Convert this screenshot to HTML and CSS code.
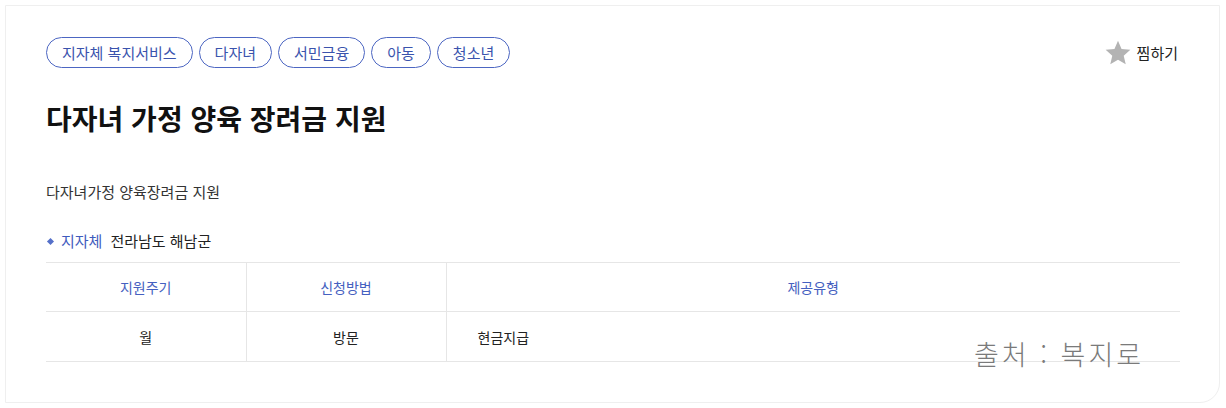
FILE: index.html
```html
<!DOCTYPE html>
<html lang="ko">
<head>
<meta charset="utf-8">
<link rel="stylesheet" href="styles.css">
</head>
<body>
<div class="card">
  <div class="top">
    <ul class="tags">
      <li>지자체 복지서비스</li>
      <li>다자녀</li>
      <li>서민금융</li>
      <li>아동</li>
      <li>청소년</li>
    </ul>
    <button class="fav">
      <svg width="28" height="28" viewBox="0 0 24 24"><path d="M12 1.6l3.05 6.9 7.55.75-5.7 5 1.72 7.45L12 17.8l-6.62 3.9 1.72-7.45-5.7-5 7.55-.75z" fill="#b3b3b3"/></svg>
      <span>찜하기</span>
    </button>
  </div>
  <h1 class="title">다자녀 가정 양육 장려금 지원</h1>
  <p class="desc">다자녀가정 양육장려금 지원</p>
  <div class="org"><span class="dot"></span><span class="org-label">지자체</span><span class="org-value">전라남도 해남군</span></div>
  <table class="info">
    <thead>
      <tr><th class="c1">지원주기</th><th class="c2">신청방법</th><th>제공유형</th></tr>
    </thead>
    <tbody>
      <tr><td class="c1">월</td><td class="c2">방문</td><td class="left">현금지급</td></tr>
    </tbody>
  </table>
  <div class="source">출처 : 복지로</div>
</div>
</body>
</html>
```
FILE: styles.css
```css
* { box-sizing: border-box; }
html, body { margin: 0; padding: 0; background: #fff; }
body {
  font-family: "Noto Sans CJK KR", "Noto Sans", sans-serif;
  color: #222;
  width: 1226px;
  height: 408px;
  overflow: hidden;
}
.card {
  position: relative;
  margin: 5px 0 0 5px;
  width: 1215px;
  height: 398px;
  border: 1px solid #efefef;
  border-radius: 0 0 20px 0;
  padding: 31px 39px 0 40px;
}
.top {
  display: flex;
  justify-content: space-between;
  align-items: center;
}
.tags {
  display: flex;
  gap: 6px;
  list-style: none;
  margin: 0;
  padding: 0;
}
.tags li {
  border: 1px solid #4c66c2;
  border-radius: 16px;
  padding: 4px 15px;
  font-size: 15px;
  line-height: 21px;
  color: #3a53ad;
}
.fav {
  display: flex;
  align-items: center;
  gap: 5px;
  background: none;
  border: 0;
  padding: 0;
  margin-right: 2px;
  font-family: inherit;
  font-size: 15px;
  color: #222;
}
.fav span { line-height: 20px; }
.title {
  margin: 30px 0 0;
  font-size: 28px;
  line-height: 40px;
  font-weight: 700;
  color: #111;
  letter-spacing: 0;
}
.desc {
  margin: 43px 0 0;
  font-size: 15px;
  line-height: 22px;
  color: #333;
}
.org {
  display: flex;
  align-items: center;
  margin-top: 27px;
  font-size: 15px;
  line-height: 22px;
}
.dot {
  width: 5px;
  height: 5px;
  background: #5570c9;
  transform: rotate(45deg);
  margin: 0 8px 0 2px;
}
.org-label { color: #3f5bbd; margin-right: 8px; }
.org-value { color: #222; }
.info {
  margin-top: 10px;
  width: 1134px;
  border-collapse: collapse;
  font-size: 14px;
}
.info th, .info td {
  border-top: 1px solid #e6e6e6;
  border-bottom: 1px solid #e6e6e6;
  text-align: center;
  font-weight: 400;
}
.info th { height: 49px; color: #4560c0; }
.info td { height: 50px; color: #222; }
.info .c1, .info .c2 { width: 200px; border-right: 1px solid #e6e6e6; }
.info td.left { text-align: left; padding-left: 31px; }
.source {
  position: absolute;
  left: 968px;
  top: 330px;
  font-family: "Noto Sans CJK KR", sans-serif;
  font-weight: 300;
  font-size: 27px;
  line-height: 36px;
  color: #7a7a7a;
  letter-spacing: 3px;
}
```
